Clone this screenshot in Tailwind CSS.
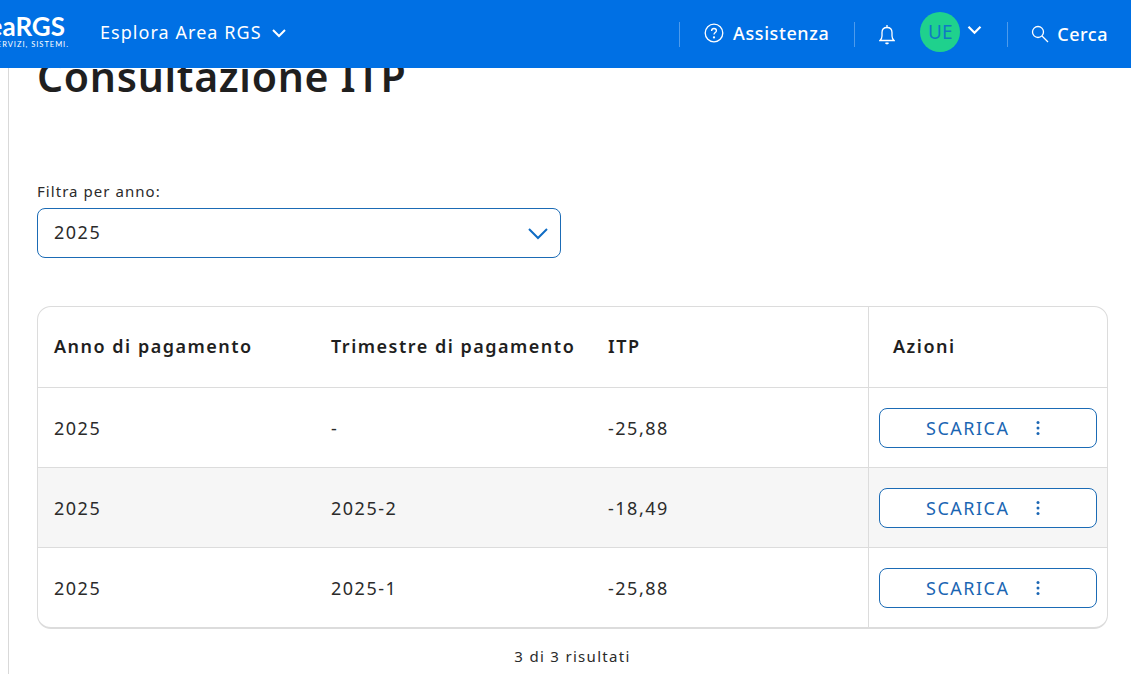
<!DOCTYPE html>
<html lang="it">
<head>
    <meta charset="UTF-8">
    <meta name="viewport" content="width=device-width, initial-scale=1.0">
    <title>Consultazione ITP</title>
    <script src="https://cdn.jsdelivr.net/npm/@tailwindcss/browser@4"></script>
</head>
<body class="bg-white text-[#1f1f1f] font-['Noto_Sans','Lato',sans-serif] h-[674px] overflow-hidden">

    <!-- header -->
    <header class="relative z-10 h-[68px] bg-[#0070e4] text-white flex items-center pr-[23px]">
        <div class="w-[69px] h-[40px] overflow-hidden flex flex-col items-end shrink-0 mt-[-2px]">
            <div class="text-[26px] leading-[27px] font-bold whitespace-nowrap pr-[4px] font-['Lato']">eaRGS</div>
            <div class="text-[7.5px] leading-[9px] tracking-[1px] whitespace-nowrap font-['Lato']">SERVIZI, SISTEMI.</div>
        </div>
        <div class="flex items-center ml-[31px] text-[18px] tracking-[1.05px] mt-[-4px]">
            Esplora Area RGS
            <svg class="ml-[9px] mt-[1px]" width="16" height="10" viewBox="0 0 16 10" fill="none" stroke="#fff" stroke-width="2"><path d="M2 2l6 6 6-6"/></svg>
        </div>

        <div class="ml-auto flex items-center">
            <div class="w-px h-[25px] bg-white/30"></div>
            <div class="flex items-center ml-[24px] mt-[-2px]">
                <svg width="20" height="20" viewBox="0 0 20 20" fill="none" stroke="#fff" stroke-width="1.3"><circle cx="10" cy="10" r="8.8"/><path d="M7.6 8c0-1.5 1-2.5 2.4-2.5s2.400 1 2.400 2.200c0 1.800-2.400 2-2.400 3.900"/><circle cx="10" cy="14.400" r=".5" fill="#fff"/></svg>
                <span class="ml-[9px] text-[18px] font-medium tracking-[0.6px]">Assistenza</span>
            </div>
            <div class="w-px h-[25px] bg-white/30 ml-[25px]"></div>
            <svg class="ml-[24px]" width="16" height="21" viewBox="0 0 16 21" fill="none" stroke="#fff" stroke-width="1.3"><path d="M1 16.500h14c-1.500-1.500-2-2.500-2-4.500V8.500C13 5.500 11 3.500 8 3.500S3 5.500 3 8.500V12c0 2-.5 3-2 4.500z"/><path d="M8 1v2.500"/><path d="M6.500 18.800c.8.800 2.200.8 3 0" stroke-width="1.600"/></svg>
            <div class="ml-[25px] w-[40px] h-[40px] rounded-full bg-[#1fd18d] flex items-center justify-center text-[#0f79c4] text-[19px] mt-[-4px]">UE</div>
            <svg class="ml-[7px] mt-[-8px]" width="15" height="10" viewBox="0 0 15 10" fill="none" stroke="#fff" stroke-width="2.200"><path d="M1.500 1.800l6 6 6-6"/></svg>
            <div class="w-px h-[25px] bg-white/30 ml-[25px]"></div>
            <div class="flex items-center ml-[23px]">
                <svg width="18" height="18" viewBox="0 0 18 18" fill="none" stroke="#fff" stroke-width="1.300"><circle cx="7" cy="7" r="5.500"/><path d="M11 11l6 6"/></svg>
                <span class="ml-[8px] text-[18px] font-medium tracking-[0.5px]">Cerca</span>
            </div>
        </div>
    </header>

    <!-- content, title slides under the header -->
    <main class="ml-[8px] border-l border-[#d9d9d9] h-[630px] pl-[28px] pr-[23px] text-[#2b2b2b]">
        <h1 class="text-[41px] leading-[48px] font-semibold text-[#1f1f1f] tracking-[0.7px] mt-[-16px]">Consultazione ITP</h1>

        <label class="block mt-[81px] text-[15px] leading-[20px] tracking-[1.05px]">Filtra per anno:</label>
        <div class="mt-[7px] w-[524px] h-[50px] border border-[#1b6bb5] rounded-[8px] flex items-center justify-between pl-[16px] pr-[11px]">
            <span class="text-[18px] tracking-[1.5px] pb-[2px]">2025</span>
            <svg width="22" height="13" viewBox="0 0 22 13" fill="none" stroke="#0f6cc4" stroke-width="2"><path d="M2 2l9 9 9-9"/></svg>
        </div>

        <div class="mt-[48px] border border-[#dcdcdc] border-b-2 rounded-[14px] overflow-hidden text-[18px] tracking-[1.5px]">
            <div class="flex h-[81px] items-center font-semibold text-[#1f1f1f] border-b border-[#dcdcdc]">
                <div class="w-[277px] pl-[16px] pb-[2px]">Anno di pagamento</div>
                <div class="w-[277px] pl-[16px] pb-[2px]">Trimestre di pagamento</div>
                <div class="w-[276px] pl-[16px] pb-[2px]">ITP</div>
                <div class="flex-1 h-full border-l border-[#dcdcdc] flex items-center pl-[24px] pb-[2px]">Azioni</div>
            </div>

            <div class="flex h-[80px] items-center border-b border-[#dcdcdc]">
                <div class="w-[277px] pl-[16px] pt-[2px]">2025</div>
                <div class="w-[277px] pl-[16px] pt-[2px]">-</div>
                <div class="w-[276px] pl-[16px] pt-[2px]">-25,88</div>
                <div class="flex-1 h-full border-l border-[#dcdcdc] flex items-center px-[10px]">
                    <button class="w-full h-[40px] bg-white border border-[#1b6bb5] rounded-[8px] flex items-center pl-[46px] pt-[2px] text-[#1b66b3]">SCARICA
                        <svg class="ml-[27px] mt-[-2px]" width="4" height="16" viewBox="0 0 4 16" fill="#1b66b3"><circle cx="2" cy="2.500" r="1.500"/><circle cx="2" cy="8" r="1.500"/><circle cx="2" cy="13.500" r="1.500"/></svg>
                    </button>
                </div>
            </div>

            <div class="flex h-[80px] items-center bg-[#f6f6f6] border-b border-[#dcdcdc]">
                <div class="w-[277px] pl-[16px] pt-[2px]">2025</div>
                <div class="w-[277px] pl-[16px] pt-[2px]">2025-2</div>
                <div class="w-[276px] pl-[16px] pt-[2px]">-18,49</div>
                <div class="flex-1 h-full border-l border-[#dcdcdc] flex items-center px-[10px]">
                    <button class="w-full h-[40px] bg-white border border-[#1b6bb5] rounded-[8px] flex items-center pl-[46px] pt-[2px] text-[#1b66b3]">SCARICA
                        <svg class="ml-[27px] mt-[-2px]" width="4" height="16" viewBox="0 0 4 16" fill="#1b66b3"><circle cx="2" cy="2.500" r="1.500"/><circle cx="2" cy="8" r="1.500"/><circle cx="2" cy="13.500" r="1.500"/></svg>
                    </button>
                </div>
            </div>

            <div class="flex h-[79px] items-center">
                <div class="w-[277px] pl-[16px] pt-[2px]">2025</div>
                <div class="w-[277px] pl-[16px] pt-[2px]">2025-1</div>
                <div class="w-[276px] pl-[16px] pt-[2px]">-25,88</div>
                <div class="flex-1 h-full border-l border-[#dcdcdc] flex items-center px-[10px]">
                    <button class="w-full h-[40px] bg-white border border-[#1b6bb5] rounded-[8px] flex items-center pl-[46px] pt-[2px] text-[#1b66b3]">SCARICA
                        <svg class="ml-[27px] mt-[-2px]" width="4" height="16" viewBox="0 0 4 16" fill="#1b66b3"><circle cx="2" cy="2.500" r="1.500"/><circle cx="2" cy="8" r="1.500"/><circle cx="2" cy="13.500" r="1.500"/></svg>
                    </button>
                </div>
            </div>
        </div>

        <div class="mt-[17px] text-center text-[15px] leading-[20px] tracking-[1.3px]">3 di 3 risultati</div>
    </main>
</body>
</html>
